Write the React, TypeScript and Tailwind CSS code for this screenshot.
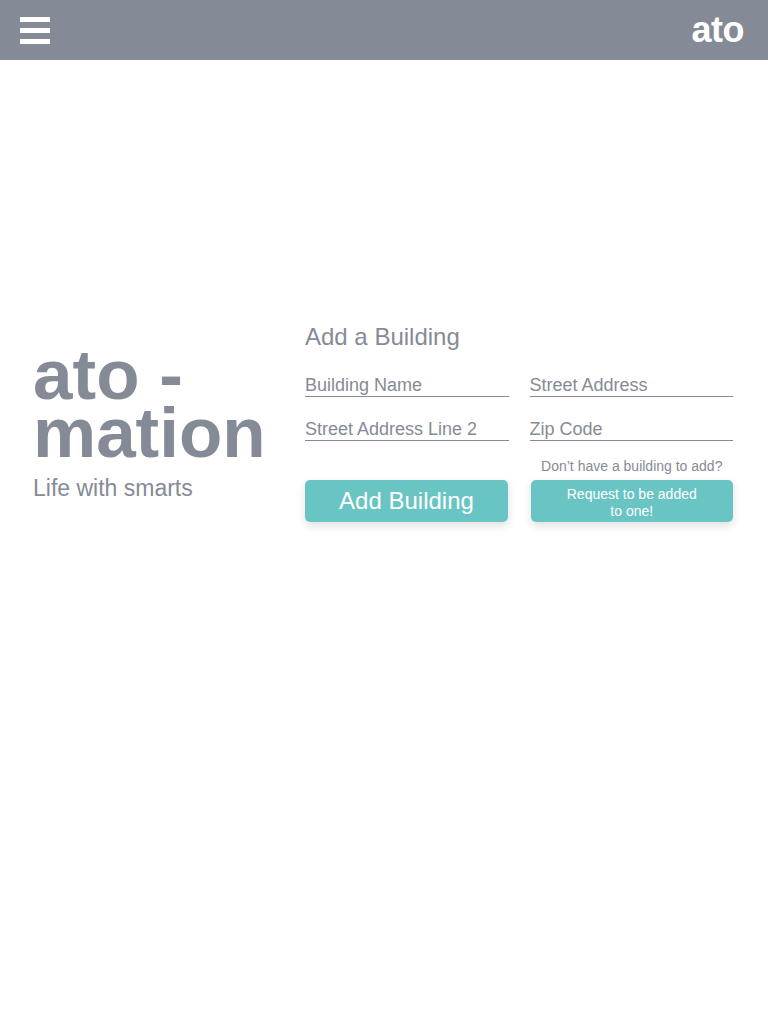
import React from "react"

const font = { fontFamily: '"Liberation Sans", Arial, sans-serif' }

function Field({ label }: { label: string }) {
  return (
    <div className="border-b border-[#858b96] h-[27px] flex items-end">
      <span className="text-[18px] leading-[21px] text-[#858b96]">{label}</span>
    </div>
  )
}

export default function App() {
  return (
    <div className="min-h-screen w-[768px] bg-white" style={font}>
      <header className="h-[60px] bg-[#858b96] flex items-center justify-between pl-5 pr-6">
        <div className="flex flex-col gap-[6px] w-[30px]">
          <span className="block h-[5px] bg-white" />
          <span className="block h-[5px] bg-white" />
          <span className="block h-[5px] bg-white" />
        </div>
        <span className="text-white font-bold text-[36px] leading-none tracking-[-0.5px]">ato</span>
      </header>

      <main className="flex items-center pl-[33px] pt-[269px]">
        <div className="w-[272px] text-[#858b96] pb-[3px]">
          <div className="font-bold text-[71px] leading-[58px]">
            <div>ato -</div>
            <div>mation</div>
          </div>
          <p className="text-[23px] leading-[28px] mt-[12px]">Life with smarts</p>
        </div>

        <div className="w-[428px]">
          <h2 className="text-[24px] leading-[28px] text-[#858b96] -mt-[6px]">Add a Building</h2>
          <div className="grid grid-cols-2 gap-x-[21px] gap-y-[17px] mt-[19px]">
            <Field label="Building Name" />
            <Field label="Street Address" />
            <Field label="Street Address Line 2" />
            <Field label="Zip Code" />
          </div>
          <div className="grid grid-cols-2 gap-x-[23px] mt-[16px]">
            <div className="flex flex-col justify-end">
              <button className="h-[42px] w-[203px] rounded-[5px] bg-[#69c5c4] text-white text-[24px] shadow-[0_4px_10px_rgba(0,0,0,0.12)]">
                Add Building
              </button>
            </div>
            <div className="flex flex-col items-center">
              <p className="text-[14px] leading-[18px] text-[#858b96] mb-[5px]">Don’t have a building to add?</p>
              <button className="h-[42px] w-[202px] rounded-[5px] bg-[#69c5c4] text-white text-[14px] leading-[17px] pt-[4px] shadow-[0_4px_10px_rgba(0,0,0,0.12)]">
                Request to be added
                <br />
                to one!
              </button>
            </div>
          </div>
        </div>
      </main>
    </div>
  )
}
